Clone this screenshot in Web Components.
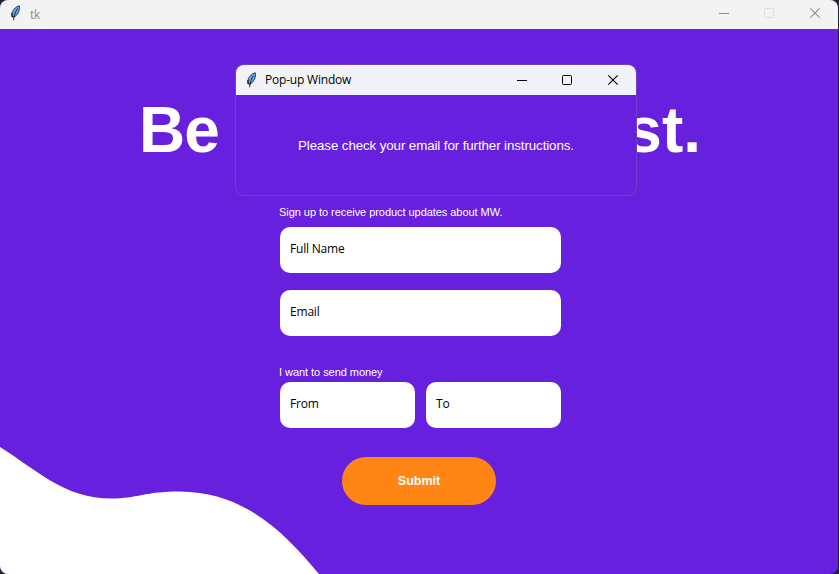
<!DOCTYPE html>
<html lang="en"><head><meta charset="utf-8"><title>tk</title>
<style>
html,body{margin:0;width:839px;height:574px;overflow:hidden;background:#24222a}
body{font-family:"Liberation Sans",Arial,sans-serif}
</style></head><body>
<app-window></app-window>
<script>
const define=(name,html)=>customElements.define(name,class extends HTMLElement{
  constructor(){super();this.attachShadow({mode:'open'}).innerHTML=html;}
});
define('feather-icon',`<style>:host{display:block;width:12px;height:16px}svg{display:block}</style>
<svg width="12" height="16" viewBox="0 0 12 16"><path d="M9.3.8C6.4 1.4 3.6 4 2.5 6.6c-.6 1.6-.7 3-.4 4.6l1.4 1c2.4-.8 4.300-3 5.200-5.500C9.500 4.600 9.800 2.600 9.300.800Z" fill="#62a8f0" stroke="#15181d" stroke-width=".8"/><path d="M7.800 3.500C5.900 6 4.200 9.200 3.600 15.300" fill="none" stroke="#15181d" stroke-width=".9"/><path d="M1.900 8v3.400l1.600 1" fill="none" stroke="#15181d" stroke-width="1.100"/></svg>`);
define('window-controls',`<style>:host{display:block;width:104px;height:12px}svg{display:block}</style>
<svg width="104" height="12" viewBox="0 0 104 12" fill="none" stroke="currentColor"><path d="M0 6.5H10"/><rect x="45.5" y="1.5" width="9" height="9" rx="1" style="stroke:var(--max,currentColor)"/><path d="M91.3 1.3l9.4 9.4M100.7 1.3l-9.4 9.4" stroke-width="1.1"/></svg>`);
define('title-bar',`<style>:host{display:flex;align-items:center;box-sizing:border-box;font:12px/16px "Open Sans","Noto Sans",sans-serif}
feather-icon{margin-right:var(--icon-gap,7px)}window-controls{margin-left:auto}span{letter-spacing:-.2px;padding-top:var(--drop,0)}</style>
<feather-icon></feather-icon><span><slot></slot></span><window-controls></window-controls>`);
define('text-field',`<style>:host{display:flex;align-items:center;box-sizing:border-box;height:46px;border-radius:10px;background:#fff;color:#000;padding:0 10px 2px;font:12px/16px "Open Sans","Noto Sans",sans-serif;letter-spacing:-.2px}</style><slot></slot>`);
define('pill-button',`<style>:host{display:flex;align-items:center;justify-content:center;width:154px;height:48px;border-radius:24px;background:#ff8614;color:#fff;font-weight:bold;font-size:12.5px}</style><slot></slot>`);
define('wave-shape',`<style>:host{position:absolute;left:0;bottom:0}svg{display:block}</style>
<svg width="320" height="128" viewBox="0 446 320 128"><path d="M0 447C38 471 65 498.500 111 498.500C137 498.500 145 491.500 180 491.500C242 492 282 529 319 574H0Z" fill="#fff"/></svg>`);
define('sign-up-form',`<style>:host{display:flex;flex-direction:column;width:282px;margin:0 auto 0 279px;font-size:11px;line-height:14px;color:#fff}
span{letter-spacing:-.05px}
text-field{margin-left:1px}.a{margin-top:8px}.b{margin-top:17px}.l{margin-top:29px}.row{display:grid;grid-template-columns:1fr 1fr;gap:11px;margin:3px 0 29px 1px}.row text-field{margin:0}pill-button{margin-left:63px}</style>
<div><span>Sign up to receive product updates about MW.</span></div>
<text-field class="a">Full Name</text-field><text-field class="b">Email</text-field>
<div class="l"><span>I want to send money</span></div>
<div class="row"><text-field>From</text-field><text-field>To</text-field></div>
<pill-button>Submit</pill-button>`);
define('popup-window',`<style>:host{position:absolute;left:235px;top:64px;width:402px;height:132px;box-sizing:border-box;border:1px solid #7041b8;border-radius:9px;overflow:hidden;background:#6720dd;color:#fff;display:flex;flex-direction:column}
title-bar{height:30px;padding:0 15px 0 10px;background:linear-gradient(90deg,#f2f3f7,#f0f3fb);color:#000}
.m{flex:1;display:flex;align-items:center;justify-content:center;padding-top:2px;font-size:13.330px;line-height:16px;letter-spacing:-.1px}</style>
<title-bar>Pop-up Window</title-bar><div class="m"><span><slot></slot></span></div>`);
define('app-window',`<style>:host{display:flex;flex-direction:column;position:relative;width:838px;height:574px;border-radius:8px;overflow:hidden;background:#6720dd}
.bar{height:29px;flex:none;padding:0 15px 3px 10px;background:#f3f3f3;color:#8e8e8e;--max:#dedede;--icon-gap:8px;--drop:3px}
h1{margin:64px 0 0 139px;width:562px;height:74px;line-height:74px;display:flex;justify-content:space-between;font-size:64px;color:#fff}
h1 span:first-child{letter-spacing:-1px}
sign-up-form{margin-top:38px}</style>
<title-bar class="bar">tk</title-bar><wave-shape></wave-shape>
<h1><span>Be</span><span>st.</span></h1>
<sign-up-form></sign-up-form>
<popup-window>Please check your email for further instructions.</popup-window>`);
</script></body></html>
